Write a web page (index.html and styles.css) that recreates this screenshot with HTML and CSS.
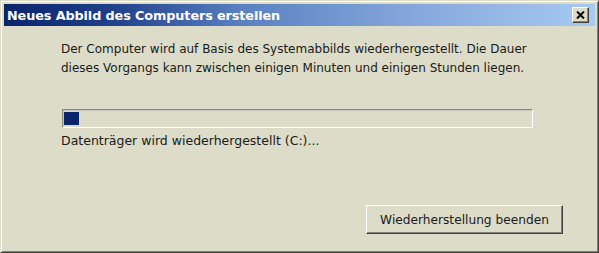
FILE: index.html
```html
<!doctype html>
<html>

<head>
	<meta charset="UTF-8">
	<title>Neues Abbild des Computers erstellen</title>
	<link rel="stylesheet" href="styles.css">
</head>

<body>
	<div class="window">
		<div class="titlebar">
			<span class="title">Neues Abbild des Computers erstellen</span>
			<button class="close">
				<svg width="9" height="8" viewBox="0 0 9 8">
					<path d="M1 0.5 L8 7.5 M8 0.5 L1 7.5" stroke="#000" stroke-width="2" fill="none" />
				</svg>
			</button>
		</div>

		<div class="content">
			<p class="intro">Der Computer wird auf Basis des Systemabbilds wiederhergestellt. Die Dauer<br>
				dieses Vorgangs kann zwischen einigen Minuten und einigen Stunden liegen.</p>

			<div class="progress">
				<div class="chunk"></div>
			</div>
			<p class="status">Datenträger wird wiederhergestellt (C:)...</p>

			<div class="actions">
				<button class="btn">Wiederherstellung beenden</button>
			</div>
		</div>
	</div>
</body>

</html>
```

FILE: styles.css
```css
body {
	margin: 0;
	padding: 0;
	width: 599px;
	height: 253px;
	overflow: hidden;
	font-family: "DejaVu Sans", Verdana, sans-serif;
	font-size: 12.5px;
}

.window {
	box-sizing: border-box;
	width: 599px;
	height: 253px;
	background: #dcdcc9;
	border-top: 1px solid #dcdcc9;
	border-left: 1px solid #dcdcc9;
	border-right: 1px solid #404040;
	border-bottom: 1px solid #404040;
	box-shadow: inset 1px 1px 0 #ffffff, inset -1px -1px 0 #808080;
	padding: 3px;
	display: flex;
	flex-direction: column;
}

.titlebar {
	height: 22px;
	display: flex;
	align-items: center;
	justify-content: space-between;
	padding: 0 6px 0 3px;
	background: linear-gradient(to right, #0a246a 0%, #1e3f8a 18%, #5a80c0 40%, #86a8dc 70%, #a6caf0 100%);
	color: #fff;
}

.title {
	font-weight: bold;
	font-size: 12.8px;
	letter-spacing: -0.1px;
}

.close {
	width: 17px;
	height: 16px;
	padding: 0;
	margin: 0;
	display: flex;
	align-items: center;
	justify-content: center;
	background: #dcdcc9;
	border: 1px solid;
	border-color: #ffffff #404040 #404040 #ffffff;
	box-shadow: inset -1px -1px 0 #808080;
}

.content {
	flex: 1;
	padding: 14px 62px 0 57px;
	display: flex;
	flex-direction: column;
}

.intro {
	margin: 0;
	line-height: 19px;
	font-size: 12px;
	white-space: nowrap;
	color: #1a1a1a;
}

.progress {
	margin: 31px 0 0 1px;
	height: 13px;
	border: 1px solid;
	border-color: #8c887e #ffffff #ffffff #8c887e;
	box-shadow: inset 1px 1px 0 #c8c6b8;
	padding: 2px 1px;
}

.chunk {
	width: 15px;
	height: 13px;
	background: #0a246a;
}

.status {
	margin: 5px 0 0 0;
	color: #1a1a1a;
}

.actions {
	margin-top: auto;
	margin-bottom: 15px;
	display: flex;
	justify-content: flex-end;
	margin-right: -30px;
}

.btn {
	width: 197px;
	height: 29px;
	background: #dcdcc9;
	border: 1px solid;
	border-color: #ffffff #404040 #404040 #ffffff;
	box-shadow: inset -1px -1px 0 #808080;
	font-family: "DejaVu Sans", Verdana, sans-serif;
	font-size: 12.2px;
	color: #1a1a1a;
}
```
